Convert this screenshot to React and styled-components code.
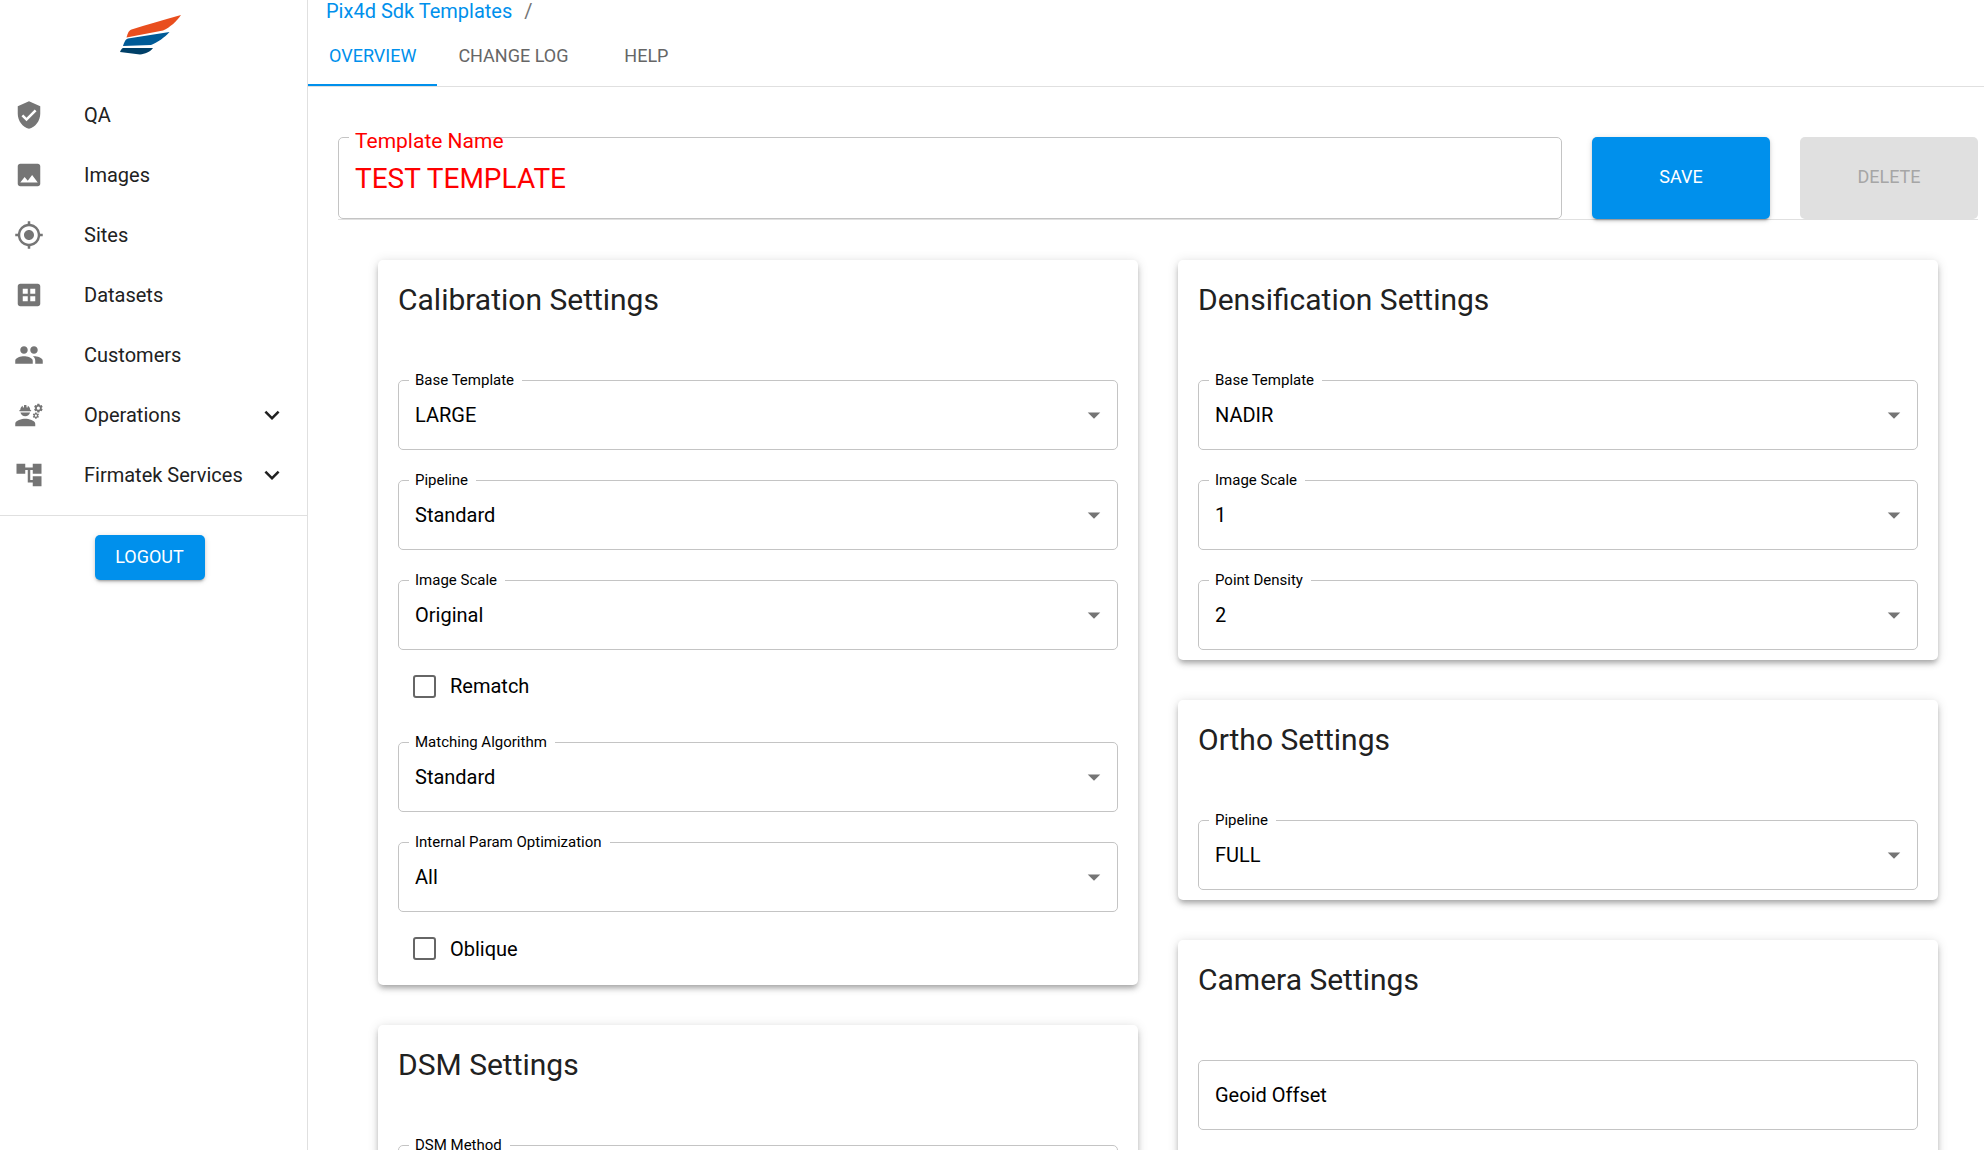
import { useState, useId } from 'react';
import styled, { createGlobalStyle } from 'styled-components';
import {
    MdVerifiedUser,
    MdImage,
    MdMyLocation,
    MdDataset,
    MdPeople,
    MdEngineering,
    MdAccountTree,
    MdExpandMore,
    MdArrowDropDown
} from 'react-icons/md';


const navItems = [
    { name: 'QA', Icon: MdVerifiedUser },
    { name: 'Images', Icon: MdImage },
    { name: 'Sites', Icon: MdMyLocation },
    { name: 'Datasets', Icon: MdDataset },
    { name: 'Customers', Icon: MdPeople },
    { name: 'Operations', Icon: MdEngineering, expandable: true },
    { name: 'Firmatek Services', Icon: MdAccountTree, expandable: true },
]

const tabs = ['Overview', 'Change Log', 'Help']

const App = () => {
    const [tab, setTab] = useState('Overview')

    return (
        <Layout>
            <GlobalStyle />
            <Sidebar />
            <Main>
                <Breadcrumb aria-label="breadcrumb">
                    <a href="#templates">Pix4d Sdk Templates</a>
                    <span>/</span>
                </Breadcrumb>
                <Tabs role="tablist">
                    {tabs.map(name => (
                        <Tab
                            key={name}
                            role="tab"
                            aria-selected={tab === name}
                            $active={tab === name}
                            onClick={() => setTab(name)}>
                            {name}
                        </Tab>
                    ))}
                </Tabs>
                <Content>
                    <TemplateForm />
                    <Cards>
                        <Column>
                            <Card title="Calibration Settings">
                                <SelectField label="Base Template" options={['LARGE']} />
                                <SelectField label="Pipeline" options={['Standard']} />
                                <SelectField label="Image Scale" options={['Original']} />
                                <CheckField label="Rematch" />
                                <SelectField label="Matching Algorithm" options={['Standard']} />
                                <SelectField label="Internal Param Optimization" options={['All']} />
                                <CheckField label="Oblique" />
                            </Card>
                            <Card title="DSM Settings">
                                <SelectField label="DSM Method" options={['Standard']} />
                            </Card>
                        </Column>
                        <Column>
                            <Card title="Densification Settings">
                                <SelectField label="Base Template" options={['NADIR']} />
                                <SelectField label="Image Scale" options={['1']} />
                                <SelectField label="Point Density" options={['2']} />
                            </Card>
                            <Card title="Ortho Settings">
                                <SelectField label="Pipeline" options={['FULL']} />
                            </Card>
                            <Card title="Camera Settings">
                                <TextField label="Geoid Offset" />
                            </Card>
                        </Column>
                    </Cards>
                </Content>
            </Main>
        </Layout>
    )
}


export default App

function Sidebar() {
    return (
        <SidebarContainer>
            <LogoLink href="#home" aria-label="Home">
                <Logo />
            </LogoLink>
            <Nav>
                {navItems.map(({ name, Icon, expandable }) => (
                    <NavLink key={name} href={`#${name}`}>
                        <Icon className="icon" />
                        <span>{name}</span>
                        {expandable ? <MdExpandMore className="arrow" /> : ''}
                    </NavLink>
                ))}
            </Nav>
            <LogoutBar>
                <Button type="button">Logout</Button>
            </LogoutBar>
        </SidebarContainer>
    )
}

function Logo() {
    return (
        <svg width="62" height="42" viewBox="0 0 62 42" aria-hidden="true">
            <path fill="#e94e1e" d="M61 1C43 6 26 11 11.500 15.500C8.500 16.500 7.500 20 6.500 23.500L43 16.500C50 13.500 57 7 61 1Z" />
            <path fill="#005b97" d="M49.500 18L8 24.500C5 25.500 4.500 28 3 32L31 31C37 28.500 45 23.500 49.500 18Z" />
            <path fill="#004068" d="M33 34H3C1.500 34.500 1 36 0 38L20 40.500C25 40 30 38 33 34Z" />
        </svg>
    )
}

function TemplateForm() {
    const [name, setName] = useState('TEST TEMPLATE')

    return (
        <TemplateRow>
            <NameField>
                <input id="template-name" value={name} onChange={e => setName(e.target.value)} />
                <NameLabel htmlFor="template-name">Template Name</NameLabel>
                <Outline aria-hidden="true">
                    <legend>Template Name</legend>
                </Outline>
            </NameField>
            <Button $large type="button">Save</Button>
            <Button $large type="button" disabled>Delete</Button>
        </TemplateRow>
    )
}

function Card({ title, children }) {
    return (
        <CardContainer>
            <h2>{title}</h2>
            {children}
        </CardContainer>
    )
}

function SelectField({ label, options }) {
    const id = useId()
    const [value, setValue] = useState(options[0])

    return (
        <Field>
            <select id={id} value={value} onChange={e => setValue(e.target.value)}>
                {options.map(option => <option key={option}>{option}</option>)}
            </select>
            <FieldLabel htmlFor={id}>{label}</FieldLabel>
            <MdArrowDropDown className="arrow" />
            <Outline aria-hidden="true">
                <legend>{label}</legend>
            </Outline>
        </Field>
    )
}

function TextField({ label }) {
    const [value, setValue] = useState('')

    return (
        <Field>
            <input
                type="text"
                aria-label={label}
                placeholder={label}
                value={value}
                onChange={e => setValue(e.target.value)} />
            <Outline aria-hidden="true" />
        </Field>
    )
}

function CheckField({ label }) {
    const [checked, setChecked] = useState(false)

    return (
        <CheckLabel>
            <input type="checkbox" checked={checked} onChange={() => setChecked(!checked)} />
            {label}
        </CheckLabel>
    )
}


const GlobalStyle = createGlobalStyle`
    *{
        box-sizing: border-box;
    }
    body{
        margin: 0;
        background: #fff;
        color: #212121;
        font-family: Roboto, sans-serif;
        font-size: 20px;
        line-height: 30px;
    }
    a{
        text-decoration: none;
    }
    button, input, select{
        font: inherit;
        color: inherit;
    }
`

const Layout = styled.div`
    display: flex;
    height: 100vh;
    overflow: hidden;
`

const SidebarContainer = styled.aside`
    width: 308px;
    flex-shrink: 0;
    border-right: 1px solid #e0e0e0;
`

const LogoLink = styled.a`
    display: flex;
    justify-content: center;
    height: 85px;
    padding: 14px 6px 0 0;
`

const Nav = styled.nav`
    display: flex;
    flex-direction: column;
    padding-bottom: 10px;
    border-bottom: 1px solid #e0e0e0;
`

const NavLink = styled.a`
    display: flex;
    align-items: center;
    height: 60px;
    padding: 0 20px 0 14px;
    color: #212121;

    span{
        flex: 1;
    }
    .icon{
        width: 30px;
        height: 30px;
        margin-right: 40px;
        color: #757575;
    }
    .arrow{
        width: 30px;
        height: 30px;
    }
`

const LogoutBar = styled.div`
    display: flex;
    justify-content: center;
    padding: 19px 8px 0 0;
`

const Button = styled.button`
    width: ${({ $large }) => $large ? '178px' : '110px'};
    height: ${({ $large }) => $large ? 'auto' : '45px'};
    flex-shrink: 0;
    padding: 0 0 2px;
    border: 0;
    border-radius: 5px;
    background: #0090ec;
    box-shadow: 0 3px 2px -2px rgba(0,0,0,.2), 0 2px 3px rgba(0,0,0,.14), 0 1px 6px rgba(0,0,0,.12);
    color: #fff;
    font-size: 18px;
    text-transform: uppercase;
    cursor: pointer;

    &:disabled{
        background: #e0e0e0;
        box-shadow: none;
        color: #a6a6a6;
        cursor: default;
    }
`

const Main = styled.main`
    flex: 1;
    min-width: 0;
    overflow: hidden;
`

const Breadcrumb = styled.nav`
    display: flex;
    gap: 12px;
    height: 26px;
    padding-left: 18px;
    line-height: 22px;
    color: #757575;

    a{
        color: #0090ec;
    }
`

const Tabs = styled.div`
    display: flex;
    border-bottom: 1px solid #e0e0e0;
`

const Tab = styled.button`
    min-width: 114px;
    height: 60px;
    padding: 2px 21px 0;
    border: 0;
    border-bottom: 2px solid ${({ $active }) => $active ? '#0090ec' : 'transparent'};
    background: none;
    color: ${({ $active }) => $active ? '#0090ec' : '#666'};
    font-size: 18px;
    text-transform: uppercase;
    cursor: pointer;
`

const Content = styled.div`
    padding: 50px 6px 0 30px;
`

const TemplateRow = styled.form`
    display: flex;
    gap: 30px;
    height: 83px;
    border-bottom: 1px solid #e0e0e0;
`

const Outline = styled.fieldset`
    position: absolute;
    inset: 0;
    margin: 0;
    padding: 0 10px;
    border: 1px solid #c4c4c4;
    border-radius: 5px;
    pointer-events: none;

    legend{
        height: 1px;
        padding: 0 7px;
        font-size: 15px;
        line-height: 1px;
        visibility: hidden;
    }
`

const NameField = styled.div`
    position: relative;
    flex: 1;
    color: #f00;

    input{
        width: 100%;
        height: 100%;
        padding: 0 17px;
        border: 0;
        outline: 0;
        background: none;
        font-size: 28px;
    }
`

const NameLabel = styled.label`
    position: absolute;
    z-index: 1;
    top: -11px;
    left: 17px;
    font-size: 21px;
`

const Cards = styled.div`
    display: grid;
    grid-template-columns: 1fr 1fr;
    gap: 40px;
    padding: 40px;
`

const Column = styled.div`
    display: flex;
    flex-direction: column;
    gap: 40px;
`

const CardContainer = styled.section`
    padding: 20px 20px 10px;
    border-radius: 5px;
    background: #fff;
    box-shadow: 0 4px 5px -2px rgba(0,0,0,.2), 0 4px 6px rgba(0,0,0,.14), 0 1px 12px rgba(0,0,0,.12);

    &:last-child{
        flex: 1;
    }
    h2{
        margin: 0 0 60px;
        font-size: 30px;
        font-weight: 400;
        line-height: 40px;
    }
`

const Field = styled.div`
    position: relative;
    height: 70px;
    color: #000;

    & + &, label + &{
        margin-top: 30px;
    }
    select, input{
        display: block;
        width: 100%;
        height: 100%;
        padding: 0 40px 0 17px;
        border: 0;
        outline: 0;
        background: none;
        appearance: none;
    }
    input::placeholder{
        color: #000;
        opacity: 1;
    }
    .arrow{
        position: absolute;
        top: 20px;
        right: 9px;
        width: 30px;
        height: 30px;
        color: #757575;
        pointer-events: none;
    }
`

const FieldLabel = styled.label`
    position: absolute;
    z-index: 1;
    top: -10px;
    left: 17px;
    font-size: 15px;
    line-height: 20px;
`

const CheckLabel = styled.label`
    display: flex;
    align-items: center;
    gap: 14px;
    height: 52px;
    margin-top: 10px;
    padding-left: 15px;
    color: #000;

    input{
        width: 23px;
        height: 23px;
        margin: 0;
        border: 2px solid #666;
        border-radius: 3px;
        appearance: none;
    }
    input:checked{
        border-color: #0090ec;
        background: #0090ec;
    }
    &:last-child{
        height: 53px;
    }
`
